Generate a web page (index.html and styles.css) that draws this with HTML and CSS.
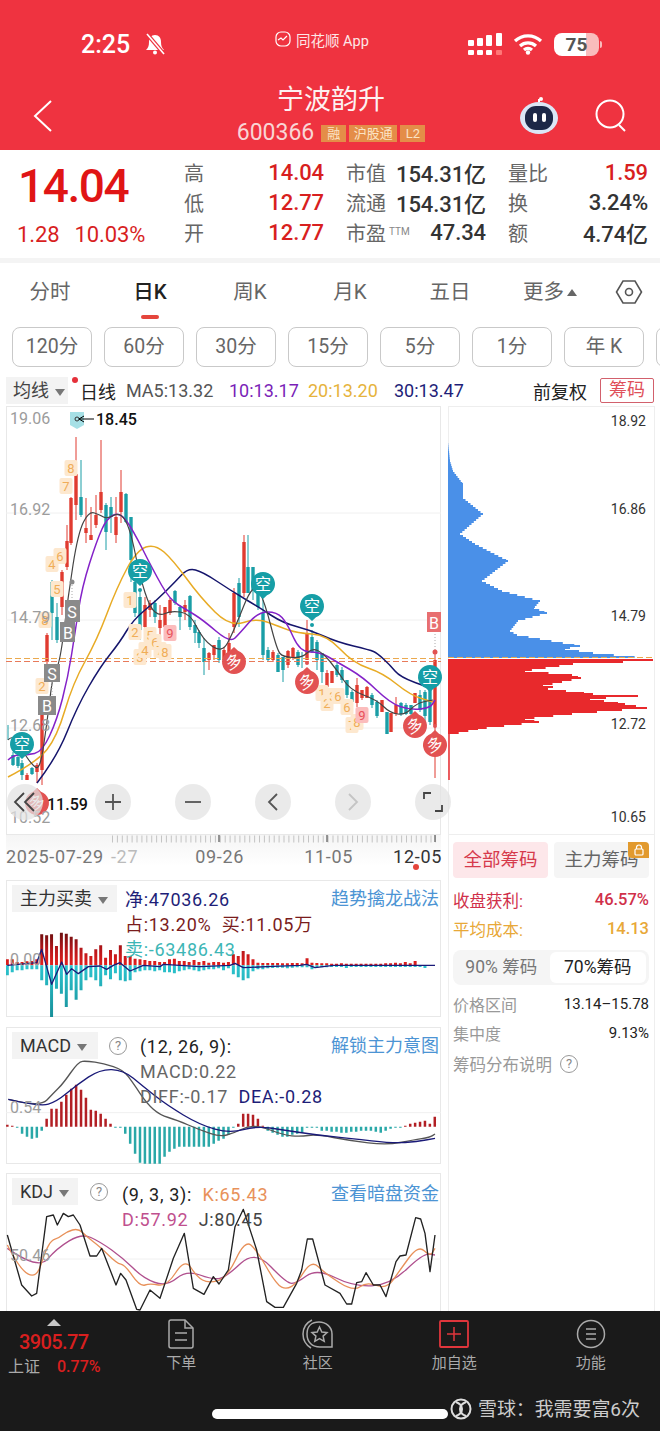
FILE: index.html
```html
<!DOCTYPE html>
<html lang="en">
<head>
  <meta charset="UTF-8" />
  <meta name="viewport" content="width=device-width, initial-scale=1.0"/>
  <title>宁波韵升 600366</title>
  <link rel="stylesheet" href="styles.css">
</head>
<body>
<div class="page">

  <header class="top">
    <div class="status">
      <span class="clock">2:25</span>
      <svg class="bell" width="22" height="22" viewBox="0 0 22 22"><path d="M11 2c-4 0-6 3-6 7 0 4-1 6-3 8h18c-2-2-3-4-3-8 0-4-2-7-6-7z" fill="#fff"/><circle cx="11" cy="19.5" r="2" fill="#fff"/><path d="M3 1l17 20" stroke="#ef3340" stroke-width="4"/><path d="M3 1l17 20" stroke="#fff" stroke-width="1.6"/></svg>
      <span class="app-name">
        <svg width="16" height="16" viewBox="0 0 16 16"><rect x="1" y="1" width="14" height="14" rx="5" fill="none" stroke="#fff" stroke-width="1.2"/><path d="M3 9l3-2 2 2 4-4" fill="none" stroke="#fff" stroke-width="1.2"/></svg>
        同花顺 App
      </span>
      <svg class="signal" width="34" height="23" viewBox="0 0 34 23"><g fill="#fff"><rect x="0" y="7" width="6" height="6" rx="1"/><rect x="9" y="5" width="6" height="8" rx="1"/><rect x="18" y="2" width="6" height="11" rx="1"/><rect x="28" y="0" width="6" height="13" rx="1"/><rect x="0" y="17" width="6" height="5" rx="1"/><rect x="9" y="17" width="6" height="5" rx="1"/><rect x="18" y="17" width="6" height="5" rx="1"/></g><rect x="28" y="17" width="6" height="5" rx="1" fill="#f77"/></svg>
      <svg class="wifi" width="30" height="22" viewBox="0 0 30 22"><path d="M2 8a19 19 0 0 1 26 0M7 13a12 12 0 0 1 16 0M11 17a6 6 0 0 1 8 0" fill="none" stroke="#fff" stroke-width="3.2"/><circle cx="15" cy="19.5" r="2.2" fill="#fff"/></svg>
      <span class="battery">75</span>
    </div>
    <div class="title-row">
      <svg class="back" width="20" height="32" viewBox="0 0 20 32"><path d="M18 1L2 16l16 15" fill="none" stroke="#fff" stroke-width="2"/></svg>
      <div class="title">
        <h1>宁波韵升</h1>
        <div class="code">600366<span class="tag tag-one">融</span><span class="tag tag-three">沪股通</span><span class="tag tag-l2">L2</span></div>
      </div>
      <svg class="robot" width="40" height="40" viewBox="0 0 40 40"><path d="M20 6V3" stroke="#fff" stroke-width="2"/><circle cx="22" cy="3" r="2" fill="#fff"/><ellipse cx="20" cy="22" rx="19" ry="16" fill="#dbe6f6"/><rect x="6" y="10" width="28" height="24" rx="11" fill="#1c2747"/><rect x="14" y="17" width="4" height="9" rx="2" fill="#fff"/><rect x="23" y="17" width="4" height="9" rx="2" fill="#fff"/></svg>
      <svg class="search" width="34" height="34" viewBox="0 0 34 34"><circle cx="15" cy="15" r="13.5" fill="none" stroke="#fff" stroke-width="2"/><path d="M24 26l6 6" stroke="#fff" stroke-width="2"/></svg>
    </div>
  </header>

  <section class="quote">
    <div class="price">
      <div class="last">14.04</div>
      <div class="change"><span>1.28</span><span>10.03%</span></div>
    </div>
    <div class="stats">
      <div class="stat"><label>高</label><b class="up">14.04</b></div>
      <div class="stat"><label>市值</label><b>154.31亿</b></div>
      <div class="stat"><label>量比</label><b class="up">1.59</b></div>
      <div class="stat"><label>低</label><b class="up">12.77</b></div>
      <div class="stat"><label>流通</label><b>154.31亿</b></div>
      <div class="stat"><label>换</label><b>3.24%</b></div>
      <div class="stat"><label>开</label><b class="up">12.77</b></div>
      <div class="stat"><label>市盈<sup>TTM</sup></label><b>47.34</b></div>
      <div class="stat"><label>额</label><b>4.74亿</b></div>
    </div>
  </section>

  <nav class="tabs">
    <span class="tab">分时</span>
    <span class="tab active">日K</span>
    <span class="tab">周K</span>
    <span class="tab">月K</span>
    <span class="tab">五日</span>
    <span class="tab">更多<i class="caret-up"></i></span>
    <svg class="hex" width="28" height="26" viewBox="0 0 28 26"><path d="M8 2h12l6.500 11L20 24H8L1.500 13z" fill="none" stroke="#555" stroke-width="1.6"/><circle cx="14" cy="13" r="3.500" fill="none" stroke="#555" stroke-width="1.6"/></svg>
  </nav>

  <div class="periods">
    <span class="period">120分</span>
    <span class="period">60分</span>
    <span class="period">30分</span>
    <span class="period">15分</span>
    <span class="period">5分</span>
    <span class="period">1分</span>
    <span class="period">年 K</span>
    <span class="period"></span>
  </div>

  <div class="legend">
    <span class="ma-select">均线<i class="caret"></i></span>
    <i class="red-dot"></i>
    <span class="daily">日线</span>
    <span class="ma5">MA5:13.32</span>
    <span class="ma10">10:13.17</span>
    <span class="ma20">20:13.20</span>
    <span class="ma30">30:13.47</span>
    <span class="adjust">前复权</span>
    <span class="chip-btn">筹码</span>
  </div>

  <div class="main">
    <div class="left-col">

      <div class="kline">
        <svg class="kline-svg" width="435" height="429" viewBox="6 406 435 429">
          <defs>
            <path id="pin" d="M-4 11.300 0 15 4 11.300A12 12 0 1 0-4 11.300Z"/>
            <rect id="chip" x="-6.500" y="-8" width="13" height="16" rx="2"/>
          </defs>
          <path class="grid-line" d="M6 513H441M6 620H441M6 728H441"/>

          <path class="wick teal" d="M8 725V740M13 752V766M18 753V768M22 760V780M32 767V775M52 580V640M57 603V643M81 460V517M106 503V550M111 497V533M126 493V523M131 517V582M135 580V617M140 590V640M155 600V623M175 590V605M180 605V630M190 595V630M195 620V643M199 630V648M204 638V675M219 637V663M239 578V627M248 535V593M253 567V600M258 587V610M263 600V660M268 647V662M278 653V672M283 657V682M298 650V667M302 652V668M312 630V653M317 640V670M322 653V683M337 663V677M342 667V683M347 680V698M352 690V703M372 693V708M377 700V718M387 712V734M401 702V716M406 703V715M411 705V715M420 690V712M425 690V722M430 680V725"/>
          <path class="body teal" d="M13 755V765M18 757V766M22 763V775M32 768V774M52 582V613M57 617V640M81 497V515M106 505V532M111 507V517M126 494V522M131 517V560M135 582V613M140 597V630M155 603V617M175 591V603M180 607V617M190 596V627M195 625V633M199 632V643M204 648V662M219 640V660M239 583V617M248 567V593M253 567V590M258 587V607M263 613V655M268 650V660M278 655V672M283 657V670M298 652V665M312 637V652M317 642V660M322 653V672M337 665V675M342 670V680M347 680V695M352 692V702M372 695V705M377 702V716M387 712V734M401 703V714M406 705V714M411 705V714M420 695V710M425 692V716M430 690V722"/>
          <path class="wick red" d="M27 773V780M37 763V783M42 700V785M47 633V665M62 570V615M67 525V570M71 497V545M76 437V520M86 498V543M91 507V540M96 495V528M101 440V513M116 497V543M121 470V523M145 597V630M150 600V617M160 605V640M165 607V633M170 598V615M185 600V620M209 652V670M214 645V660M224 647V665M229 633V653M234 588V633M244 535V597M273 650V662M288 650V668M293 647V660M307 620V660M327 670V687M332 671V683M357 678V707M362 690V700M367 686V698M382 700V712M391 713V732M396 697V716M415 693V703M435 650V778"/>
          <path class="body red" d="M27 775V780M37 765V772M42 702V770M47 635V662M62 572V607M67 541V567M71 498V543M76 474V505M86 528V533M91 535V540M96 515V525M101 492V510M116 517V535M121 492V512M145 605V627M150 603V610M160 620V628M165 607V627M170 600V613M185 605V612M209 653V660M214 645V655M224 650V660M229 643V652M234 593V627M244 542V593M273 652V660M288 651V665M293 648V657M307 633V660M327 673V687M332 671V683M357 685V703M362 690V698M367 687V698M382 700V712M391 713V732M396 705V714M415 693V703M435 660V725"/>

          <path class="dash-red" d="M6 661.500H441"/>
          <path class="dash-orange" d="M6 658.500H441"/>

          <polyline class="smooth line l-ma30" points="37,783 57,757 77,707 100,667 120,642 133,620 157,600 175,582 188,568 203,572 230,590 260,608 283,623 310,630 337,642 370,650 377,653 390,665 400,677 430,688"/>
          <polyline class="smooth line l-ma20" points="8,777 37,762 57,737 73,683 97,640 117,587 137,550 155,544 173,560 200,597 230,627 257,618 280,627 297,633 327,635 353,663 383,673 410,695 433,702"/>
          <polyline class="smooth line l-ma10" points="8,760 13,755 27,755 42,752 57,720 68,677 75,633 82,587 97,540 107,518 120,512 133,530 153,570 170,600 187,610 203,620 230,643 240,633 258,612 277,612 287,623 300,652 320,652 337,662 363,677 390,703 410,710 430,708 435,700"/>
          <polyline class="smooth line l-ma5" points="8,740 12,735 20,747 32,765 40,770 47,723 53,673 60,663 68,597 78,533 89,511 100,515 107,519 120,512 130,528 140,577 150,608 160,616 170,611 190,613 203,640 222,653 233,633 254,580 265,603 277,650 283,657 302,658 312,648 323,653 337,670 350,690 377,700 390,713 405,715 417,703 433,700"/>

          <g class="chips">
            <g transform="translate(71 468)"><use href="#chip"/><text>8</text></g>
            <g transform="translate(66 486)"><use href="#chip"/><text>7</text></g>
            <g transform="translate(52 564)"><use href="#chip"/><text>4</text></g>
            <g transform="translate(60 556)"><use href="#chip"/><text>6</text></g>
            <g transform="translate(57 589)"><use href="#chip"/><text>5</text></g>
            <g transform="translate(45 620)"><use href="#chip"/><text>8</text></g>
            <g transform="translate(42 686)"><use href="#chip"/><text>2</text></g>
            <g transform="translate(130 600)"><use href="#chip"/><text>1</text></g>
            <g transform="translate(135 632)"><use href="#chip"/><text>2</text></g>
            <g transform="translate(140 657)"><use href="#chip"/><text>3</text></g>
            <g transform="translate(145 650)"><use href="#chip"/><text>4</text></g>
            <g transform="translate(150 635)"><use href="#chip"/><text>5</text></g>
            <g transform="translate(155 642)"><use href="#chip"/><text>6</text></g>
            <g transform="translate(160 650)"><use href="#chip"/><text>7</text></g>
            <g transform="translate(165 652)"><use href="#chip"/><text>8</text></g>
            <g transform="translate(322 693)"><use href="#chip"/><text>1</text></g>
            <g transform="translate(327 703)"><use href="#chip"/><text>2</text></g>
            <g transform="translate(333 696)"><use href="#chip"/><text>3</text></g>
            <g transform="translate(338 696)"><use href="#chip"/><text>6</text></g>
            <g transform="translate(347 707)"><use href="#chip"/><text>6</text></g>
            <g transform="translate(352 725)"><use href="#chip"/><text>7</text></g>
            <g transform="translate(357 722)"><use href="#chip"/><text>8</text></g>
          </g>
          <g class="chips pink">
            <g transform="translate(170 633)"><use href="#chip"/><text>9</text></g>
            <g transform="translate(362 715)"><use href="#chip"/><text>9</text></g>
          </g>

          <rect class="sq" x="65" y="600" width="15" height="22"/>
          <text class="sq-text" x="72" y="612">S</text>
          <rect class="sq" x="60" y="622" width="15" height="20"/>
          <text class="sq-text" x="68" y="633">B</text>
          <rect class="sq" x="44" y="664" width="16" height="18"/>
          <text class="sq-text" x="52" y="674">S</text>
          <rect class="sq" x="38" y="696" width="18" height="19"/>
          <text class="sq-text" x="47" y="706">B</text>
          <path class="dots" d="M72 582V600M52 682V696M435 631V650"/>
          <circle class="sq" cx="72" cy="582" r="2.500"/>

          <rect x="427" y="612" width="14" height="20" fill="#e86f70"/>
          <text class="sq-text" x="434" y="623">B</text>
          <circle cx="435" cy="652" r="2.500" fill="#e25252"/>

          <g class="pin-teal">
            <use href="#pin" transform="translate(140 571)"/><text x="140" y="571">空</text>
            <circle cx="140" cy="590" r="2"/>
            <use href="#pin" transform="translate(263 584)"/><text x="263" y="584">空</text>
            <use href="#pin" transform="translate(312 606)"/><text x="312" y="606">空</text>
            <circle cx="312" cy="625" r="2"/>
            <use href="#pin" transform="translate(22 744)"/><text x="22" y="744">空</text>
            <use href="#pin" transform="translate(430 677)"/><text x="430" y="677">空</text>
          </g>
          <g class="pin-red">
            <use href="#pin" transform="translate(234 662) rotate(180)"/><text transform="translate(234 662) rotate(-20)">多</text>
            <use href="#pin" transform="translate(307 682) rotate(180)"/><text transform="translate(307 682) rotate(-20)">多</text>
            <circle cx="307" cy="663" r="2"/>
            <use href="#pin" transform="translate(415 726) rotate(180)"/><text transform="translate(415 726) rotate(-20)">多</text>
            <use href="#pin" transform="translate(435 745) rotate(180)"/><text transform="translate(435 745) rotate(-20)">多</text>
            <circle cx="435" cy="726" r="2"/>
            <use href="#pin" transform="translate(37 803) rotate(180)"/><text transform="translate(37 803) rotate(-20)">多</text>
          </g>

          <text class="axis-val" x="10" y="424">19.06</text>
          <text class="axis-val" x="10" y="515">16.92</text>
          <text class="axis-val" x="10" y="623">14.79</text>
          <text class="axis-val" x="10" y="731">12.68</text>
          <text class="axis-val" x="10" y="823">10.52</text>

          <path d="M70 412h14v13l-7 4-7-4z" fill="#a6e0e6"/>
          <circle cx="77" cy="419" r="2" fill="none" stroke="#333"/>
          <path d="M79 419H94M79 419l5-3M79 419l5 3" stroke="#000" fill="none"/>
          <text class="peak" x="96" y="425">18.45</text>
          <text class="peak" x="47" y="810">11.59</text>
        </svg>

        <div class="zoom-row">
          <span class="zoom-btn first"><svg width="24" height="24" viewBox="0 0 24 24"><path d="M11 3L2 12l9 9M21 3l-9 9 9 9" fill="none" stroke="#444" stroke-width="1.800"/></svg></span>
          <span class="zoom-btn"><svg width="20" height="20" viewBox="0 0 20 20"><path d="M2 10h16M10 2v16" stroke="#555" stroke-width="1.800"/></svg></span>
          <span class="zoom-btn"><svg width="20" height="20" viewBox="0 0 20 20"><path d="M2 10h16" stroke="#555" stroke-width="1.800"/></svg></span>
          <span class="zoom-btn"><svg width="12" height="20" viewBox="0 0 12 20"><path d="M10 2L2 10l8 8" fill="none" stroke="#555" stroke-width="1.800"/></svg></span>
          <span class="zoom-btn"><svg width="12" height="20" viewBox="0 0 12 20"><path d="M2 2l8 8-8 8" fill="none" stroke="#c4c4c4" stroke-width="1.800"/></svg></span>
          <span class="zoom-btn"><svg width="22" height="22" viewBox="0 0 22 22"><path d="M2 8V2h7M20 14v6h-7" fill="none" stroke="#444" stroke-width="1.800"/></svg></span>
        </div>
      </div>

      <div class="time-axis">
        <svg class="ticks" width="435" height="10" viewBox="6 0 435 10">
          <path class="minor" d="M112 4H436"/>
          <path class="major" d="M219 0V7M327 0V7M435 0V7"/>
        </svg>
        <div class="dates">
          <span class="d1">2025-07-29</span>
          <span class="d2">-27</span>
          <span class="d3">09-26</span>
          <span class="d4">11-05</span>
          <span class="d5">12-05</span>
        </div>
        <i class="axis-dot"></i>
      </div>

      <div class="sub-panel first-sub">
        <svg class="sub-svg" width="435" height="137" viewBox="18 12 1305 411" preserveAspectRatio="none">
          <defs>
            <linearGradient id="flowRed" gradientUnits="userSpaceOnUse" x1="0" y1="170" x2="0" y2="268"><stop offset="0" stop-color="#6b0f0f"/><stop offset=".5" stop-color="#b5161a"/><stop offset="1" stop-color="#e3201e"/></linearGradient>
            <linearGradient id="flowTeal" gradientUnits="userSpaceOnUse" x1="0" y1="268" x2="0" y2="422"><stop offset="0" stop-color="#2cc5cf"/><stop offset="1" stop-color="#178f99"/></linearGradient>
          </defs>
          <path class="flow-up" d="M22 268v-18v18m14.740 0v-18v18m14.740 0v-10v10m14.740 0v-10v10m14.740 0v-12v12m14.740 0v-13v13m14.740 0v-18v18m14.740 0v-93v93m14.740 0v-90v90m14.740 0v-93v93m14.740 0v-58v58m14.740 0v-98v98m14.740 0v-95v95m14.740 0v-86v86m14.740 0v-78v78m14.740 0v-53v53m14.740 0v-36v36m14.740 0v-28v28m14.740 0v-48v48m14.740 0v-60v60m14.740 0v-23v23m14.740 0v-46v46m14.740 0v-33v33m14.740 0v-60v60m14.740 0v-28v28m14.740 0v-28v28m14.740 0v-20v20m14.740 0v-18v18m14.740 0v-16v16m14.740 0v-13v13m14.740 0v-13v13m14.740 0v-10v10m14.740 0v-10v10m14.740 0v-18v18m14.740 0v-20v20m14.740 0v-13v13m14.740 0v-13v13m14.740 0v-10v10m14.740 0v-16v16m14.740 0v-10v10m14.740 0v-13v13m14.740 0v-8v8m14.740 0v-10v10m14.740 0v-10v10m14.740 0v-8v8m14.740 0v-10v10m14.740 0v-33v33m14.740 0v-28v28m14.740 0v-43v43m14.740 0v-33v33m14.740 0v-18v18m14.740 0v-8v8m14.740 0v-7v7m14.740 0v-7v7m14.740 0v-7v7m14.740 0v-7v7m14.740 0v-6v6m14.740 0v-6v6m14.740 0v-7v7m14.740 0v-7v7m14.740 0v-6v6m14.740 0v-21v21m14.740 0v-8v8m14.740 0v-7v7m14.740 0v-6v6m14.740 0v-6v6m14.740 0v-5v5m14.740 0v-5v5m14.740 0v-6v6m14.740 0v-5v5m14.740 0v-5v5m14.740 0v-5v5m14.740 0v-5v5m14.740 0v-5v5m14.740 0v-5v5m14.740 0v-5v5m14.740 0v-5v5m14.740 0v-6v6m14.740 0v-6v6m14.740 0v-8v8m14.740 0v-6v6m14.740 0v-10v10m14.740 0v-6v6m14.740 0v-13"/>
          <path class="flow-down" d="M22 268v30v-30m14.740 0v21v-21m14.740 0v15v-15m14.740 0v15v-15m14.740 0v12v-12m14.740 0v12v-12m14.740 0v12v-12m14.740 0v45v-45m14.740 0v60v-60m14.740 0v155v-155m14.740 0v70v-70m14.740 0v85v-85m14.740 0v125v-125m14.740 0v75v-75m14.740 0v103v-103m14.740 0v75v-75m14.740 0v45v-45m14.740 0v36v-36m14.740 0v45v-45m14.740 0v63v-63m14.740 0v30v-30m14.740 0v42v-42m14.740 0v24v-24m14.740 0v45v-45m14.740 0v48v-48m14.740 0v45v-45m14.740 0v21v-21m14.740 0v18v-18m14.740 0v15v-15m14.740 0v15v-15m14.740 0v18v-18m14.740 0v15v-15m14.740 0v21v-21m14.740 0v21v-21m14.740 0v24v-24m14.740 0v18v-18m14.740 0v15v-15m14.740 0v12v-12m14.740 0v15v-15m14.740 0v18v-18m14.740 0v15v-15m14.740 0v12v-12m14.740 0v12v-12m14.740 0v9v-9m14.740 0v15v-15m14.740 0v9v-9m14.740 0v27v-27m14.740 0v36v-36m14.740 0v45v-45m14.740 0v39v-39m14.740 0v18v-18m14.740 0v12v-12m14.740 0v12v-12m14.740 0v9v-9m14.740 0v8v-8m14.740 0v7v-7m14.740 0v7v-7m14.740 0v9v-9m14.740 0v7v-7m14.740 0v6v-6m14.740 0v6v-6m14.740 0v6v-6m14.740 0v12v-12m14.740 0v8v-8m14.740 0v6v-6m14.740 0v6v-6m14.740 0v5v-5m14.740 0v5v-5m14.740 0v5v-5m14.740 0v8v-8m14.740 0v5v-5m14.740 0v5v-5m14.740 0v5v-5m14.740 0v5v-5m14.740 0v5v-5m14.740 0v5v-5m14.740 0v5v-5m14.740 0v5v-5m14.740 0v5v-5m14.740 0v5v-5m14.740 0v5v-5m14.740 0v5v-5m14.740 0v5v-5m14.740 0v5v-5m14.740 0v5v-5m14.740 0v8"/>
          <polyline class="sub-line navy" points="22,268 110,260 125,220 155,325 185,258 200,295 215,278 235,293 265,272 300,270 320,280 340,268 360,260 390,285 430,268 480,272 490,265 600,272 690,268 705,262 730,275 800,272 900,268 920,265 945,275 1000,268 1305,268"/>
        </svg>
        <div class="sub-head">
          <span class="ind-select w-flow">主力买卖<i class="caret"></i></span>
          <div class="sub-vals">
            <div class="c-navy">净:47036.26</div>
            <div class="c-brown">占:13.20%&nbsp; 买:11.05万</div>
            <div class="c-teal">卖:-63486.43</div>
          </div>
          <a class="sub-link">趋势擒龙战法</a>
        </div>
        <span class="sub-zero flow-zero">0.00</span>
      </div>

      <div class="sub-panel">
        <svg class="sub-svg" width="435" height="137" viewBox="18 21 1305 411" preserveAspectRatio="none">
          <path class="sub-grid" d="M18 278H1323"/>
          <path class="macd-up" d="M22 320v-6m14.740 6v-3M139.900 320v-24m14.740 24v-54m14.740 54v-54m14.740 54v-75m14.740 75v-96m14.740 96v-114m14.740 114v-126m14.740 126v-111m14.740 111v-87m14.740 87v-51m14.740 51v-48m14.740 48v-39m14.740 39v-24m14.740 24v-9M714.800 320v-9m14.740 9v-39m14.740 39v-39m14.740 39v-36m14.740 36v-24m14.740 24v-3M1215.900 320v-3m14.740 3v-9m14.740 9v-12m14.740 12v-15m14.740 15v-18m14.740 18v-9m14.740 9v-30"/>
          <path class="macd-down" d="M51.500 320v3m14.740-3v21m14.740-21v30m14.740-30v36m14.740-36v33m14.740-33v12M346.300 320v3m14.740-3v3m14.740-3v21m14.740-21v51m14.740-51v81m14.740-81v108m14.740-108v111m14.740-111v111m14.740-111v111m14.740-111v111m14.740-111v90m14.740-90v75m14.740-75v66m14.740-66v60m14.740-60v60m14.740-60v60m14.740-60v60m14.740-60v60m14.740-60v60m14.740-60v60m14.740-60v51m14.740-51v42m14.740-42v36m14.740-36v24m14.740-24v3M803.200 320v12m14.740-12v18m14.740-18v24m14.740-24v30m14.740-30v30m14.740-30v24m14.740-24v21m14.740-21v18m14.740-18v3m14.740-3v3m14.740-3v3m14.740-3v12m14.740-12v12m14.740-12v15m14.740-15v15m14.740-15v18m14.740-18v18m14.740-18v15m14.740-15v15m14.740-15v12m14.740-12v12m14.740-12v12m14.740-12v15m14.740-15v18m14.740-18v12m14.740-12v6m14.740-6v3m14.740-3v3"/>
          <polyline class="smooth sub-line dark" points="25,238 120,262 160,220 190,190 235,125 260,123 310,130 370,150 400,190 440,250 480,285 530,300 600,330 660,350 700,340 740,320 780,318 850,345 900,350 950,343 1050,362 1160,375 1240,360 1290,352 1305,342"/>
          <polyline class="smooth sub-line navy" points="25,238 120,260 170,245 230,195 300,148 370,150 430,200 500,255 600,315 690,340 770,318 850,330 950,345 1050,355 1180,370 1250,365 1305,355"/>
        </svg>
        <div class="sub-head">
          <span class="ind-select w-macd">MACD<i class="caret"></i></span>
          <i class="help help-macd">?</i>
          <div class="sub-vals">
            <div>(12, 26, 9):</div>
            <div class="c-grey">MACD:0.22</div>
            <div><span class="c-grey">DIFF:-0.17</span>&nbsp; <span class="c-navy">DEA:-0.28</span></div>
          </div>
          <a class="sub-link">解锁主力意图</a>
        </div>
        <span class="sub-zero macd-zero">0.54</span>
      </div>

      <div class="sub-panel last-sub">
        <svg class="sub-svg" width="435" height="139" viewBox="18 9 1305 417" preserveAspectRatio="none">
          <path class="sub-grid" d="M18 267H1323"/>
          <polyline class="smooth sub-line kdj-d" points="22,235 115,300 170,235 245,190 300,215 370,265 430,325 500,350 560,300 640,330 680,320 765,240 860,340 890,340 950,295 1060,350 1170,345 1270,250 1305,255"/>
          <polyline class="smooth sub-line kdj-k" points="22,225 60,300 110,325 135,245 155,210 175,205 200,185 235,175 260,200 300,230 350,280 375,285 420,350 450,340 500,350 555,265 590,320 625,340 680,325 735,210 770,240 830,345 860,358 890,340 935,270 975,310 1060,365 1100,335 1160,358 1200,300 1255,225 1290,260 1305,235"/>
          <polyline class="sub-line kdj-j" points="22,195 65,345 95,378 110,370 140,140 160,135 172,165 190,130 205,140 220,135 240,165 270,258 290,258 305,235 348,345 362,310 378,330 410,418 420,420 450,360 480,385 520,265 553,190 580,355 612,373 640,320 657,342 685,300 705,170 730,118 770,240 800,395 825,412 850,412 890,340 905,300 922,207 938,207 975,345 1020,370 1040,402 1055,402 1070,338 1085,335 1098,308 1120,345 1140,345 1158,380 1188,275 1200,258 1218,255 1247,143 1262,147 1275,190 1290,305 1305,195"/>
        </svg>
        <div class="sub-head">
          <span class="ind-select w-kdj">KDJ<i class="caret"></i></span>
          <i class="help help-kdj">?</i>
          <div class="sub-vals">
            <div>(9, 3, 3):&nbsp; <span class="c-orange">K:65.43</span></div>
            <div><span class="c-pink">D:57.92</span>&nbsp; <span class="c-dark">J:80.45</span></div>
          </div>
          <a class="sub-link">查看暗盘资金</a>
        </div>
        <span class="sub-zero kdj-zero">50.46</span>
      </div>
    </div>

    <aside class="right-col">
      <div class="profile">
        <svg class="profile-svg" width="207" height="429" viewBox="448 406 207 429">
          <path class="stepped" fill="#4a90e8" data-points="448,441 450,460 453,470 463,483 463,497 483,513 460,533 475,543 508,560 482,580 502,590 540,600 534,607 547,612 518,620 510,630 517,634 580,645 565,648 593,652 645,657"/>
          <path class="stepped" fill="#e8292c" data-points="653,659 623,661 573,663 525,670 572,674 581,677 543,685 553,686 548,688 593,693 638,695 590,698 625,703 647,707 572,713 525,718 539,721 478,728 449,734"/>
          <path d="M449 734V780" stroke="#e8292c" stroke-width="1.500"/>
          <path class="dash-orange" d="M448 657.500H654"/>
        </svg>
        <span class="prof-val p1">18.92</span>
        <span class="prof-val p2">16.86</span>
        <span class="prof-val p3">14.79</span>
        <span class="prof-val p4">12.72</span>
        <span class="prof-val p5">10.65</span>
      </div>
      <div class="chip-info">
        <div class="chip-tabs">
          <span class="chip-tab on">全部筹码</span>
          <span class="chip-tab off">主力筹码
            <i class="lock"><svg width="12" height="12" viewBox="0 0 12 12"><path d="M3.500 5V3.500a2.500 2.500 0 0 1 5 0V5" fill="none" stroke="#fff" stroke-width="1.200"/><rect x="2" y="5" width="8" height="6" rx="1" fill="none" stroke="#fff" stroke-width="1.200"/></svg></i>
          </span>
        </div>
        <div class="info-row c-profit"><span>收盘获利:</span><b>46.57%</b></div>
        <div class="info-row c-cost"><span>平均成本:</span><b>14.13</b></div>
        <div class="segment">
          <span class="seg">90% 筹码</span>
          <span class="seg sel">70%筹码</span>
        </div>
        <div class="info-row detail"><span>价格区间</span><b>13.14–15.78</b></div>
        <div class="info-row detail"><span>集中度</span><b>9.13%</b></div>
        <div class="info-row detail note"><span>筹码分布说明</span><i class="help">?</i></div>
      </div>
    </aside>
  </div>

  <footer class="bottom">
    <div class="nav">
      <div class="index">
        <i class="tri"></i>
        <div class="index-val">3905.77</div>
        <div class="index-row"><span>上证</span><em>0.77%</em></div>
      </div>
      <div class="nav-item">
        <svg width="28" height="30" viewBox="0 0 28 30"><path d="M2 3a2 2 0 0 1 2-2h14l8 8v18a2 2 0 0 1-2 2H4a2 2 0 0 1-2-2z" fill="none" stroke="#aaa" stroke-width="1.500"/><path d="M18 1v8h8M8 14h12M8 21h12" fill="none" stroke="#aaa" stroke-width="1.500"/></svg>
        <span>下单</span>
      </div>
      <div class="nav-item">
        <svg width="32" height="30" viewBox="0 0 32 30"><path d="M10 1C4 4 1 9 1 15s3 11 8 14" fill="none" stroke="#aaa" stroke-width="1.500"/><path d="M5 15C5 7 10 3 17 3s13 5 13 12v13H18C10 28 5 23 5 15z" fill="none" stroke="#aaa" stroke-width="1.500"/><path d="M17.500 8l2.300 5 5.200.6-3.900 3.500 1.100 5.200-4.700-2.700-4.700 2.700 1.100-5.200-3.900-3.500 5.200-.6z" fill="none" stroke="#aaa" stroke-width="1.500"/></svg>
        <span>社区</span>
      </div>
      <div class="nav-item">
        <svg width="30" height="30" viewBox="0 0 30 30"><rect x="1" y="2" width="28" height="26" rx="1" fill="none" stroke="#e0363c" stroke-width="1.800"/><path d="M15 8v14M8 15h14" stroke="#e0363c" stroke-width="1.500"/></svg>
        <span>加自选</span>
      </div>
      <div class="nav-item">
        <svg width="30" height="30" viewBox="0 0 30 30"><circle cx="15" cy="15" r="13.500" fill="none" stroke="#aaa" stroke-width="1.500"/><path d="M10 10h10M10 15h10M10 20h10" stroke="#aaa" stroke-width="1.500"/></svg>
        <span>功能</span>
      </div>
    </div>
    <div class="home-row">
      <i class="home-bar"></i>
      <svg class="xq" width="22" height="24" viewBox="0 0 22 24"><circle cx="11" cy="12" r="9.500" fill="none" stroke="#ddd" stroke-width="2"/><path d="M6 5c8 3 8 11 0 14M16 5c-8 3-8 11 0 14" fill="none" stroke="#ddd" stroke-width="2"/></svg>
      <span class="mark">雪球：我需要富6次</span>
    </div>
  </footer>

</div>
<script src="chart.js"></script>
</body>
</html>
```

FILE: styles.css
```css
* {
  box-sizing: border-box;
}

body {
  margin: 0;
  background: #fff;
  font-family: Roboto, "Noto Sans CJK SC", sans-serif;
  color: #333;
}

.page {
  width: 660px;
  height: 1431px;
  overflow: hidden;
  display: flex;
  flex-direction: column;
}

/* red header */
.top {
  height: 150px;
  flex: none;
  background: #ef3340;
  color: #fff;
  position: relative;
}

.status {
  height: 84px;
  padding: 4px 0 0 81px;
  display: flex;
  align-items: center;
}

.clock {
  font-size: 25px;
  font-weight: 500;
  width: 63px;
}

.bell {
  flex: none;
}

.app-name {
  margin-left: 109px;
  margin-top: -10px;
  width: 193px;
  display: flex;
  align-items: center;
  gap: 5px;
  font-size: 14.500px;
  color: #fde7e7;
}

.wifi {
  margin-left: 11px;
}

.battery {
  margin-left: 11px;
  width: 45px;
  height: 23px;
  border-radius: 8px;
  background: linear-gradient(to right, #fff 72%, #f9bcbc 72%);
  color: #555;
  font-size: 19px;
  font-weight: 700;
  line-height: 23px;
  text-align: center;
  position: relative;
}

.battery::after {
  content: "";
  position: absolute;
  left: 46px;
  top: 8px;
  width: 2px;
  height: 7px;
  border-radius: 0 2px 2px 0;
  background: #f9bcbc;
}

.title-row {
  height: 66px;
  position: relative;
  display: flex;
  justify-content: center;
}

.back {
  position: absolute;
  left: 33px;
  top: 16px;
}

.robot {
  position: absolute;
  left: 519px;
  top: 12px;
}

.search {
  position: absolute;
  left: 595px;
  top: 15px;
}

.title {
  text-align: center;
  margin-left: 2px;
}

.title h1 {
  margin: 0;
  font-size: 27px;
  font-weight: 400;
  line-height: 32px;
  color: #fdf1f1;
}

.code {
  display: flex;
  align-items: center;
  font-size: 23px;
  line-height: 34px;
  color: #f9d5d5;
}

.tag {
  background: #e48d48;
  color: #fbe3c4;
  font-size: 13px;
  line-height: 17px;
  text-align: center;
  margin-left: 3px;
}

.tag-one {
  width: 25px;
  margin-left: 7px;
}

.tag-three {
  width: 48px;
}

.tag-l2 {
  width: 25px;
}

/* quote block */
.quote {
  height: 113px;
  flex: none;
  display: flex;
  border-bottom: 5px solid #f4f4f4;
}

.price {
  width: 184px;
  padding: 11px 0 0 18px;
}

.last {
  font-size: 46px;
  font-weight: 500;
  line-height: 50px;
  letter-spacing: -1.400px;
  color: #e01515;
}

.change {
  margin-top: 11px;
  margin-left: -1px;
  display: flex;
  gap: 15px;
  font-size: 22px;
  line-height: 26px;
  letter-spacing: -.1px;
  color: #d81f1f;
}

.stats {
  display: grid;
  grid-template-columns: repeat(3, 140px);
  grid-auto-rows: 30px;
  column-gap: 22px;
  padding-top: 7px;
}

.stat {
  display: flex;
  justify-content: space-between;
  align-items: center;
}

.stat label {
  font-size: 20px;
  color: #666;
}

.stat sup {
  font-size: 10px;
  color: #888;
  vertical-align: 6px;
  line-height: 0;
  margin-left: 3px;
}

.stat b {
  font-size: 22px;
  font-weight: 500;
  letter-spacing: -.1px;
  color: #333;
}

.stat b.up {
  color: #d81f1f;
}

/* period tabs */
.tabs {
  height: 57px;
  flex: none;
  display: flex;
  position: relative;
}

.tab {
  width: 100px;
  text-align: center;
  line-height: 58px;
  font-size: 20.500px;
  color: #666;
  position: relative;
}

.tab.active {
  color: #222;
  font-weight: 500;
}

.tab.active::after {
  content: "";
  position: absolute;
  left: 41px;
  top: 52px;
  width: 18px;
  height: 4px;
  border-radius: 2px;
  background: #e5453c;
}

.caret-up {
  display: inline-block;
  margin-left: 3px;
  vertical-align: 3px;
  border: 5px solid transparent;
  border-top: 0;
  border-bottom: 7px solid #666;
}

.hex {
  margin: 16px 0 0 15px;
}

.periods {
  height: 57px;
  flex: none;
  padding: 7px 0 0 12px;
  display: flex;
  gap: 12px;
}

.period {
  flex: none;
  width: 80px;
  height: 40px;
  border: 1px solid #c9c9c9;
  border-radius: 8px;
  text-align: center;
  font-size: 19.500px;
  line-height: 38px;
  color: #666;
}

.legend {
  height: 29px;
  flex: none;
  position: relative;
  display: flex;
  align-items: center;
  font-size: 18px;
  white-space: nowrap;
  padding-bottom: 2px;
}

.ma-select {
  margin-left: 6px;
  width: 62px;
  height: 27px;
  flex: none;
  background: #f3f3f3;
  padding-left: 7px;
  line-height: 27px;
  color: #444;
}

.red-dot {
  position: absolute;
  left: 72px;
  top: 0;
  width: 6px;
  height: 6px;
  border-radius: 50%;
  background: #e5303a;
}

.caret {
  display: inline-block;
  margin-left: 6px;
  vertical-align: 1px;
  border: 5px solid transparent;
  border-bottom: 0;
  border-top: 7px solid #777;
}

.daily {
  margin-left: 12px;
  width: 46px;
  color: #222;
}

.ma5 {
  width: 103px;
  color: #555;
}

.ma10 {
  width: 79px;
  color: #7a1fb8;
}

.ma20 {
  width: 86px;
  color: #e6b33c;
}

.ma30 {
  color: #1e1e78;
}

.adjust {
  margin-left: auto;
  color: #222;
}

.chip-btn {
  margin: 0 6px 0 13px;
  width: 54px;
  height: 25px;
  border: 1px solid #d2606c;
  border-radius: 2px;
  text-align: center;
  line-height: 22px;
  color: #e0505a;
}

/* charts */
.main {
  flex: 1;
  min-height: 0;
  display: flex;
  gap: 7px;
  padding-left: 6px;
  overflow: hidden;
}

.left-col {
  width: 435px;
  flex: none;
}

.kline {
  height: 429px;
  position: relative;
  outline: 1px solid #e8e8e8;
  outline-offset: -1px;
}

.kline-svg {
  display: block;
  overflow: visible;
  position: relative;
}

.grid-line {
  stroke: #f0f0f0;
  fill: none;
}

.wick {
  fill: none;
  stroke-width: 1;
}

.body {
  fill: none;
  stroke-width: 3.400;
}

.wick.teal,
.body.teal {
  stroke: #1a9ea6;
}

.wick.red,
.body.red {
  stroke: #e03b30;
}

.dash-red {
  stroke: #e87a5a;
  stroke-dasharray: 6 3;
  fill: none;
}

.dash-orange {
  stroke: #eba94e;
  stroke-dasharray: 6 3;
  fill: none;
}

.line {
  fill: none;
  stroke-width: 1.500;
  stroke-linejoin: round;
}

.l-ma5 {
  stroke: #444;
  stroke-width: 1.200;
}

.l-ma10 {
  stroke: #8422c8;
}

.l-ma20 {
  stroke: #e8ab25;
}

.l-ma30 {
  stroke: #15156c;
}

.chips use {
  fill: #fde8cf;
}

.chips text {
  font-size: 13px;
  fill: #f0ad58;
  text-anchor: middle;
  dominant-baseline: central;
}

.chips.pink use {
  fill: #fbbcbc;
}

.chips.pink text {
  fill: #e8505a;
}

.sq {
  fill: #8a8a8a;
}

.sq-text {
  font-size: 16px;
  fill: #fff;
  text-anchor: middle;
  dominant-baseline: central;
}

.dots {
  stroke: #aaa;
  stroke-dasharray: 1 2;
  fill: none;
}

.pin-teal use,
.pin-teal circle {
  fill: #169ea6;
}

.pin-red use,
.pin-red circle {
  fill: #e25252;
}

.pin-teal text,
.pin-red text {
  font-size: 16px;
  fill: #fff;
  text-anchor: middle;
  dominant-baseline: central;
}

.axis-val {
  font-size: 16px;
  fill: #9c9c9c;
}

.peak {
  font-size: 16px;
  font-weight: 500;
  fill: #111;
}

.zoom-row {
  position: absolute;
  left: 1px;
  top: 378px;
  display: flex;
  gap: 44px;
}

.zoom-btn {
  width: 36px;
  height: 36px;
  border-radius: 50%;
  background: rgba(226, 226, 226, .72);
  display: flex;
  align-items: center;
  justify-content: center;
}

.zoom-btn.first {
  margin-right: 8px;
}

.time-axis {
  height: 45px;
  position: relative;
  background: linear-gradient(to bottom, #f5f5f5, #fff 70%);
}

.ticks {
  display: block;
}

.minor {
  stroke: #c4c4c4;
  stroke-width: 7;
  stroke-dasharray: 1 3.900;
  fill: none;
}

.major {
  stroke: #555;
  stroke-width: 1.200;
}

.dates {
  display: flex;
  font-size: 18px;
  line-height: 24px;
  letter-spacing: .7px;
  color: #777;
  white-space: nowrap;
}

.d2 {
  margin-left: 7px;
  color: #bbb;
}

.d3 {
  margin-left: 57px;
}

.d4 {
  margin-left: 60px;
}

.d5 {
  margin-left: 40px;
  color: #333;
}

.axis-dot {
  position: absolute;
  left: 407px;
  top: 29px;
  width: 6px;
  height: 6px;
  border-radius: 50%;
  background: #e5453c;
}

.sub-panel {
  height: 137px;
  margin-bottom: 10px;
  position: relative;
  outline: 1px solid #e8e8e8;
  outline-offset: -1px;
}

.last-sub {
  height: 139px;
  margin-top: -1px;
  margin-bottom: 0;
}

.sub-svg {
  position: absolute;
  left: 0;
  top: 0;
}

.flow-up {
  stroke: url(#flowRed);
  stroke-width: 9;
  fill: none;
}

.flow-down {
  stroke: url(#flowTeal);
  stroke-width: 9;
  fill: none;
}

.macd-up {
  stroke: #b21f24;
  stroke-width: 7.500;
  fill: none;
}

.macd-down {
  stroke: #2aa8a8;
  stroke-width: 7.500;
  fill: none;
}

.sub-grid {
  stroke: #f0f0f0;
  stroke-width: 3;
  fill: none;
}

.sub-line {
  fill: none;
  stroke-width: 4;
  stroke-linejoin: round;
}

.navy {
  stroke: #1a1a78;
}

.dark {
  stroke: #555;
}

.kdj-d {
  stroke: #b0508e;
}

.kdj-k {
  stroke: #e8915a;
}

.kdj-j {
  stroke: #222;
}

.sub-head {
  position: relative;
  padding: 5px 0 0 6px;
  display: flex;
  align-items: flex-start;
}

.ind-select {
  height: 27px;
  flex: none;
  background: #f3f3f3;
  padding-left: 8px;
  font-size: 18px;
  line-height: 27px;
  color: #333;
  white-space: nowrap;
}

.w-flow {
  width: 105px;
  margin-right: 8px;
}

.w-macd {
  width: 86px;
}

.w-kdj {
  width: 66px;
}

.help {
  display: block;
  flex: none;
  width: 18px;
  height: 18px;
  border: 1px solid #999;
  border-radius: 50%;
  font-style: normal;
  font-size: 13px;
  line-height: 16px;
  text-align: center;
  color: #888;
}

.help-macd {
  margin: 5px 13px 0 11px;
}

.help-kdj {
  margin: 5px 14px 0 12px;
}

.sub-vals {
  font-size: 18px;
  line-height: 25px;
  letter-spacing: .7px;
  color: #222;
  white-space: nowrap;
  position: relative;
  top: 2px;
}

.last-sub .sub-vals {
  top: 4px;
}

.sub-link {
  position: absolute;
  right: 2px;
  top: 6px;
  font-size: 18px;
  line-height: 25px;
  color: #4c94d4;
}

.last-sub .sub-link {
  top: 8px;
}

.c-navy {
  color: #1e1e78;
}

.c-brown {
  color: #7a1c1c;
}

.c-teal {
  color: #3db6b6;
}

.c-grey {
  color: #666;
}

.c-orange {
  color: #e8915a;
}

.c-pink {
  color: #c0508e;
}

.c-dark {
  color: #444;
}

.sub-zero {
  position: absolute;
  left: 4px;
  font-size: 16px;
  color: #9c9c9c;
}

.flow-zero {
  top: 70px;
}

.macd-zero {
  top: 71px;
}

.kdj-zero {
  top: 73px;
}

.right-col {
  width: 207px;
  flex: none;
  border-left: 1px solid #eee;
  border-right: 1px solid #eee;
}

.profile {
  height: 429px;
  position: relative;
  border-top: 1px solid #eee;
  border-bottom: 1px solid #eee;
}

.profile-svg {
  position: absolute;
  left: -1px;
  top: -1px;
  overflow: visible;
}

.prof-val {
  position: absolute;
  right: 8px;
  font-size: 14px;
  line-height: 18px;
  color: #333;
}

.p1 {
  top: 5px;
}

.p2 {
  top: 93px;
}

.p3 {
  top: 200px;
}

.p4 {
  top: 308px;
}

.p5 {
  top: 401px;
}

.chip-info {
  padding: 7px 5px 0 4px;
  font-size: 16px;
}

.chip-tabs {
  display: flex;
  gap: 6px;
}

.chip-tab {
  width: 95px;
  height: 36px;
  border-radius: 4px;
  text-align: center;
  font-size: 18.500px;
  line-height: 36px;
  position: relative;
}

.chip-tab.on {
  background: #fde7ea;
  color: #d63a4c;
}

.chip-tab.off {
  background: #f5f5f5;
  color: #666;
}

.lock {
  position: absolute;
  right: 0;
  top: 0;
  width: 21px;
  height: 16px;
  background: #e29a2e;
  border-radius: 0 4px 0 4px;
  display: flex;
  align-items: center;
  justify-content: center;
}

.info-row {
  display: flex;
  justify-content: space-between;
  align-items: center;
  height: 29px;
  font-size: 16.500px;
}

.info-row b {
  font-weight: 500;
}

.c-profit {
  margin-top: 7px;
  color: #d0304a;
}

.c-cost {
  color: #e8a838;
}

.segment {
  margin: 7px 0 4px;
  height: 35px;
  padding: 2px 3px 2px 0;
  background: #f5f5f5;
  border-radius: 8px;
  display: flex;
  font-size: 17.500px;
}

.seg {
  width: 97px;
  text-align: center;
  line-height: 31px;
  color: #777;
}

.seg.sel {
  background: #fff;
  border-radius: 6px;
  color: #222;
}

.detail span {
  font-size: 16px;
  color: #999;
}

.detail b {
  font-weight: 400;
  font-size: 15px;
  color: #222;
}

.note {
  justify-content: flex-start;
  gap: 8px;
  margin-top: 2px;
}

.note span {
  font-size: 16.500px;
}

/* bottom bar */
.bottom {
  height: 120px;
  flex: none;
  background: #1a1a1a;
}

.nav {
  display: grid;
  grid-template-columns: 113px repeat(4, 136.500px);
  height: 80px;
}

.index {
  position: relative;
  padding: 20px 0 0 8px;
}

.tri {
  position: absolute;
  left: 47px;
  top: 8px;
  border: 7px solid transparent;
  border-top: 0;
  border-bottom: 7px solid #c8c8c8;
}

.index-val {
  margin-left: 11px;
  font-size: 20px;
  font-weight: 500;
  line-height: 22px;
  letter-spacing: -.6px;
  color: #d81f1f;
}

.index-row {
  margin-top: 3px;
  display: flex;
  gap: 17px;
  font-size: 16px;
  line-height: 22px;
  color: #aaa;
}

.index-row em {
  font-style: normal;
  font-weight: 500;
  color: #d81f1f;
}

.nav-item {
  padding-top: 8px;
  display: flex;
  flex-direction: column;
  align-items: center;
  gap: 3px;
  font-size: 15px;
  line-height: 22px;
  color: #aaa;
}

.home-row {
  height: 40px;
  position: relative;
}

.home-bar {
  position: absolute;
  left: 212px;
  top: 18px;
  width: 236px;
  height: 10px;
  border-radius: 5px;
  background: #fff;
}

.xq {
  position: absolute;
  left: 450px;
  top: 6px;
}

.mark {
  position: absolute;
  left: 478px;
  top: 5px;
  font-size: 19px;
  line-height: 28px;
  letter-spacing: -.1px;
  color: #ccc;
  white-space: nowrap;
}
```

FILE: chart.js
```js
// round off the average lines
document.querySelectorAll("polyline.smooth").forEach(function (line) {
  const pts = line.getAttribute("points").split(" ").map(function (p) {
    return p.split(",").map(Number);
  });
  let d = "M" + pts[0];
  for (let i = 1; i < pts.length - 1; i++) {
    const midX = (pts[i][0] + pts[i + 1][0]) / 2;
    const midY = (pts[i][1] + pts[i + 1][1]) / 2;
    d += "Q" + pts[i] + " " + midX + "," + midY;
  }
  d += "L" + pts[pts.length - 1];
  const path = document.createElementNS("http://www.w3.org/2000/svg", "path");
  path.setAttribute("class", line.getAttribute("class"));
  path.setAttribute("d", d);
  line.replaceWith(path);
});

// chip distribution is drawn in 2px rows from the left edge
document.querySelectorAll("path.stepped").forEach(function (shape) {
  const pts = shape.dataset.points.split(" ").map(function (p) {
    return p.split(",").map(Number);
  });
  const left = 448;
  let d = "";
  for (let k = 0; k < pts.length - 1; k++) {
    const a = pts[k];
    const b = pts[k + 1];
    for (let y = a[1]; y < b[1]; y += 2) {
      const x = a[0] + (b[0] - a[0]) * (y - a[1]) / (b[1] - a[1]);
      d += "M" + left + " " + y + "H" + x.toFixed(1) + "V" + (y + 2) + "H" + left + "Z";
    }
  }
  shape.setAttribute("d", d);
});
```
